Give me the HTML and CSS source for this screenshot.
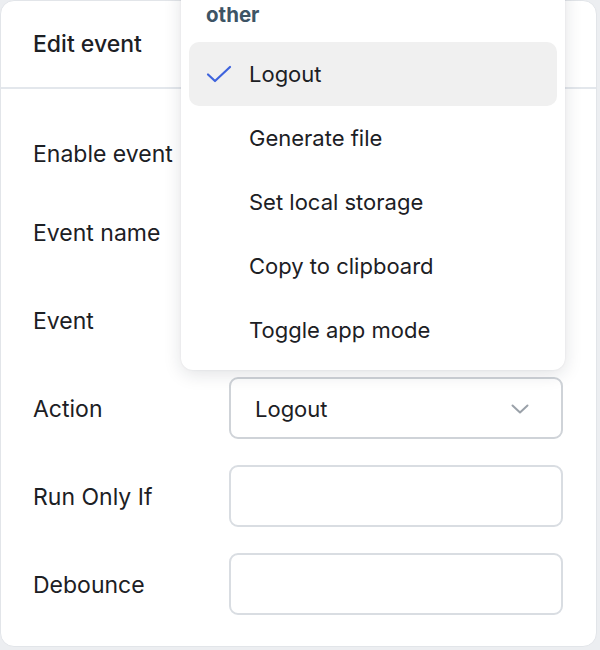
FILE: index.html
```html
<!DOCTYPE html>
<html lang="en">
<head>
    <meta charset="UTF-8">
    <meta name="viewport" content="width=device-width, initial-scale=1.0">
    <title>Edit event</title>
    <link rel="stylesheet" href="styles.css">
</head>
<body>
    <div class="panel">
        <div class="panel-header">Edit event</div>
        <div class="panel-body">
            <div class="row row-short">
                <span class="label">Enable event</span>
                <span class="toggle"></span>
            </div>
            <div class="row">
                <span class="label">Event name</span>
                <div class="field"></div>
            </div>
            <div class="row">
                <span class="label">Event</span>
                <div class="field"></div>
            </div>
            <div class="row">
                <span class="label">Action</span>
                <div class="field select">
                    <span>Logout</span>
                    <svg class="chevron" width="18" height="10" viewBox="0 0 18 10">
                        <path d="M1.5 1.5 L9 8.5 L16.5 1.5" fill="none" stroke="#9aa1a9" stroke-width="2" stroke-linecap="round" stroke-linejoin="round"/>
                    </svg>
                </div>
            </div>
            <div class="row">
                <span class="label">Run Only If</span>
                <div class="field"></div>
            </div>
            <div class="row">
                <span class="label">Debounce</span>
                <div class="field"></div>
            </div>
        </div>

        <!-- action menu, open -->
        <div class="menu">
            <div class="menu-group">other</div>
            <div class="menu-item selected">
                <svg class="check" width="26" height="20" viewBox="0 0 26 20">
                    <path d="M2 10.5 L9 17 L24 3" fill="none" stroke="#3e63dd" stroke-width="2.2" stroke-linecap="round" stroke-linejoin="round"/>
                </svg>
                <span>Logout</span>
            </div>
            <div class="menu-item"><span>Generate file</span></div>
            <div class="menu-item"><span>Set local storage</span></div>
            <div class="menu-item"><span>Copy to clipboard</span></div>
            <div class="menu-item"><span>Toggle app mode</span></div>
        </div>
    </div>
</body>
</html>
```

FILE: styles.css
```css
body {
    margin: 0;
    background-color: #eceef1;
    font-family: Inter, "Noto Sans", sans-serif;
    color: #1c2024;
    overflow: hidden;
}
.panel {
    position: relative;
    box-sizing: border-box;
    width: 597px;
    height: 647px;
    background: white;
    border: 1px solid #e2e5e9;
    border-radius: 14px;
}
.panel-header {
    box-sizing: border-box;
    height: 88px;
    padding-left: 32px;
    display: flex;
    align-items: center;
    font-size: 23px;
    font-weight: 500;
    border-bottom: 2px solid #e3e7ec;
}
.panel-body {
    padding: 42px 32px 0 32px;
    display: flex;
    flex-direction: column;
    gap: 26px;
}
.row {
    display: flex;
    align-items: center;
    height: 62px;
}
.row-short {
    height: 44px;
}
.label {
    width: 196px;
    font-size: 23px;
    padding-top: 2px;
}
.toggle {
    width: 44px;
    height: 24px;
    border-radius: 12px;
    background: #3e63dd;
}
.field {
    box-sizing: border-box;
    width: 334px;
    height: 62px;
    border: 2px solid #d9dde2;
    border-radius: 9px;
}
.select {
    display: flex;
    align-items: center;
    justify-content: space-between;
    padding: 2px 32px 0 24px;
    font-size: 22px;
    border-color: #cfd3d8;
}
.menu {
    position: absolute;
    top: -20px;
    left: 180px;
    box-sizing: border-box;
    width: 384px;
    padding: 0 8px 8px 8px;
    background: white;
    border-radius: 12px;
    box-shadow: 0 4px 18px rgba(20, 30, 50, 0.13), 0 0 2px rgba(20, 30, 50, 0.08);
}
.menu-group {
    padding: 20px 0 0 17px;
    height: 41px;
    line-height: 28px;
    font-size: 20.5px;
    font-weight: 700;
    color: #3d5465;
}
.menu-item {
    height: 64px;
    display: flex;
    align-items: center;
    padding-left: 60px;
    border-radius: 10px;
    font-size: 22px;
}
.menu-item.selected {
    padding-left: 17px;
    gap: 17px;
    background: #f0f0f0;
}
```
